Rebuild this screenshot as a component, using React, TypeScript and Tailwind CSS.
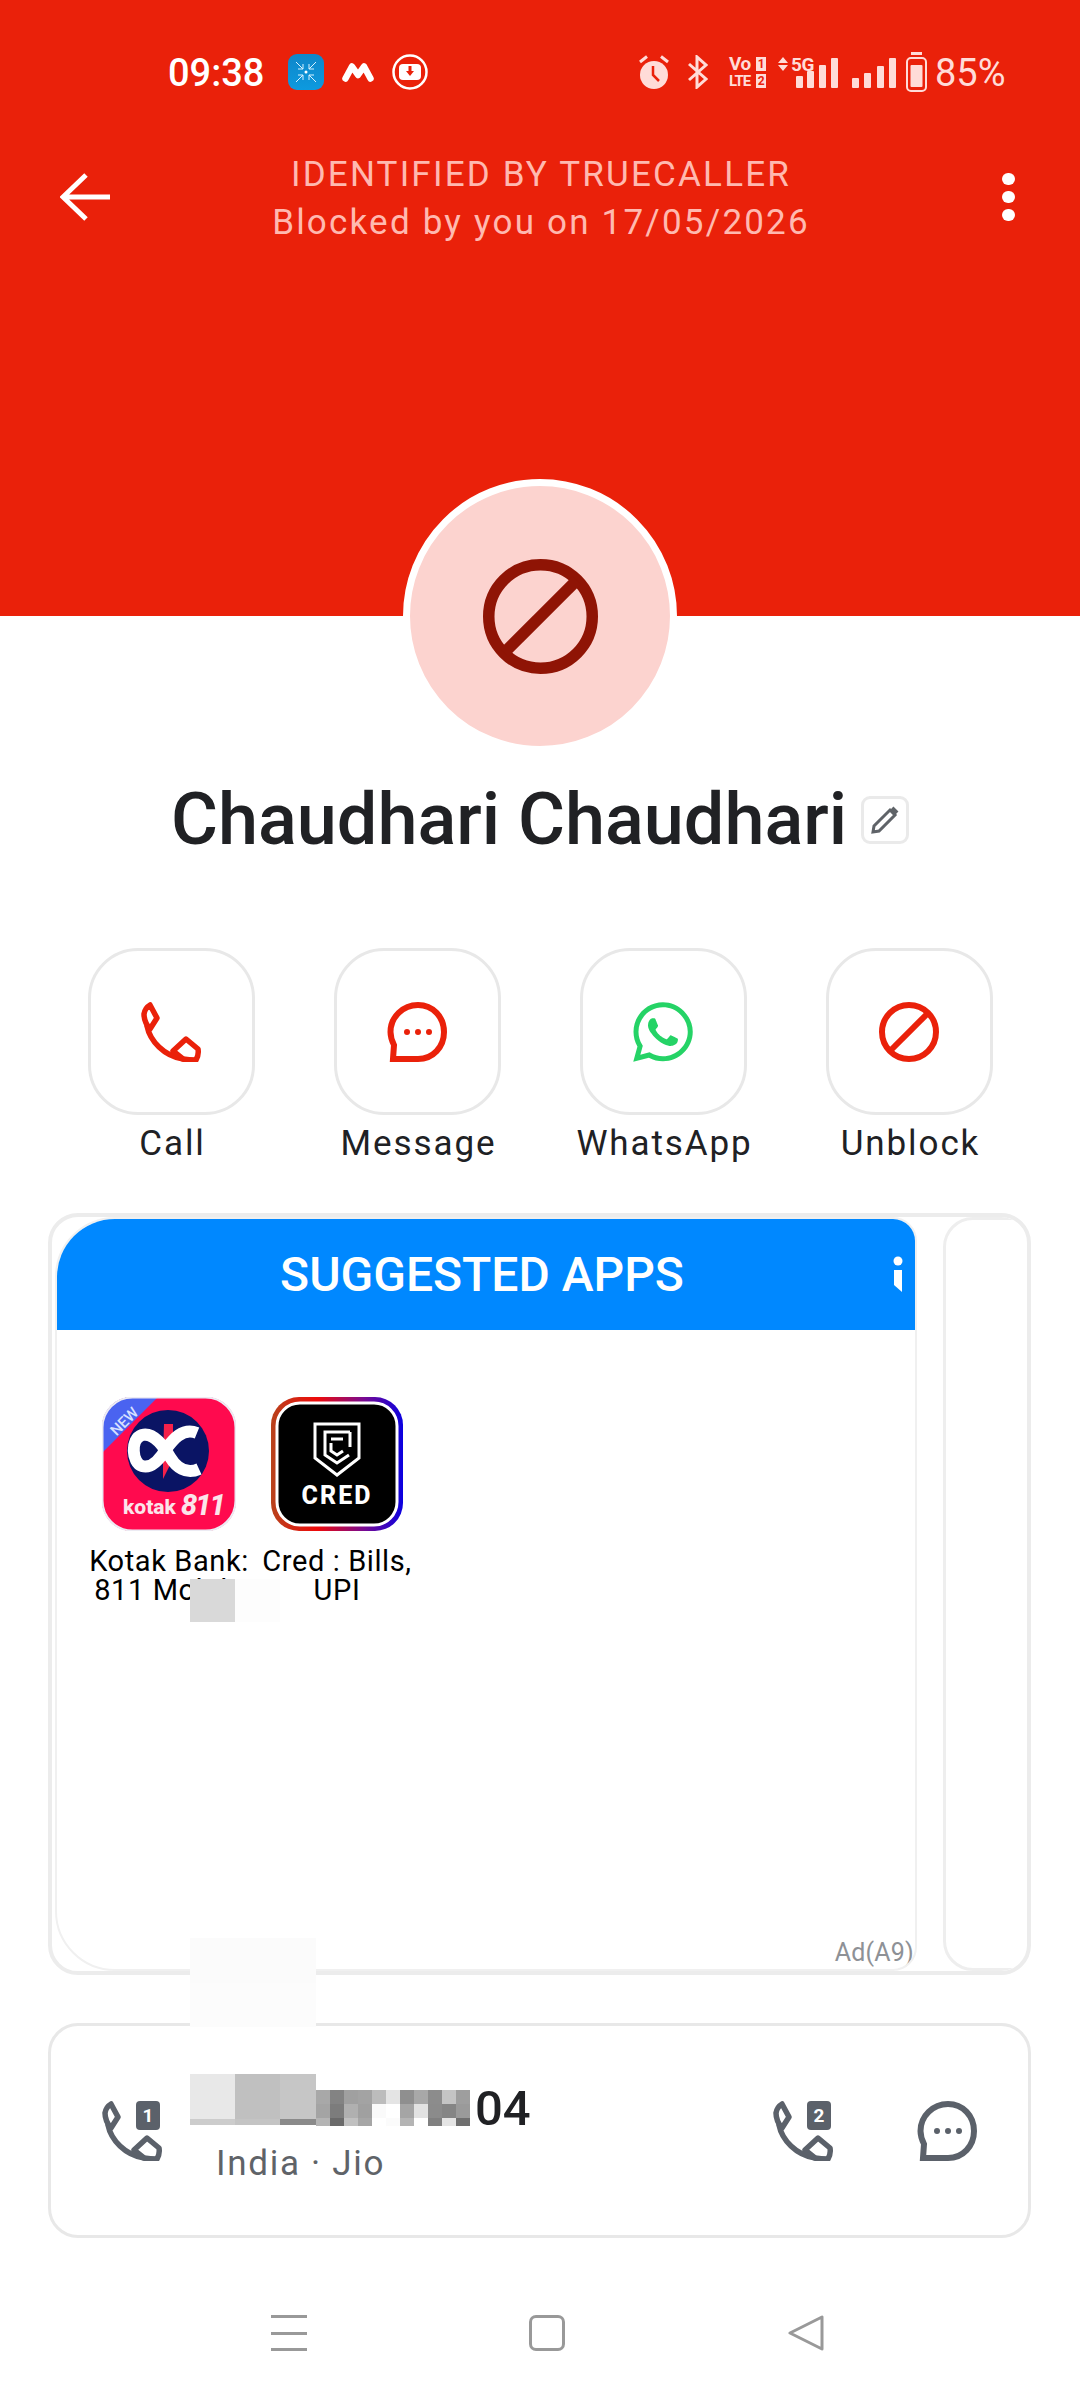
import { FaWhatsapp } from 'react-icons/fa'

const mosaicRows = [
    ['bg-[#a8a8a8]', 'bg-[#838383]', 'bg-[#a0a0a0]', 'bg-[#a3a3a3]', 'bg-[#bcbcbc]', 'bg-[#e4e4e4]', 'bg-[#8f8f8f]', 'bg-[#a8a8a8]', 'bg-[#8c8c8c]', 'bg-[#c4c4c4]', 'bg-[#9e9e9e]'],
    ['bg-[#a4a4a4]', 'bg-[#7c7c7c]', 'bg-[#b0b0b0]', 'bg-[#a0a0a0]', 'bg-[#fafafa]', 'bg-[#ffffff]', 'bg-[#a5a5a5]', 'bg-[#e2e2e2]', 'bg-[#8b8b8b]', 'bg-[#858585]', 'bg-[#9a9a9a]'],
    ['bg-[#b4b4b4]', 'bg-[#6a6a6a]', 'bg-[#c0c0c0]', 'bg-[#a6a6a6]', 'bg-[#ffffff]', 'bg-[#fbfbfb]', 'bg-[#b4b4b4]', 'bg-[#ffffff]', 'bg-[#808080]', 'bg-[#e4e4e4]', 'bg-[#6f6f6f]'],
]

function PhoneIcon({ className }: { className?: string }) {
    return (
        <svg viewBox="0 0 60 60" className={className} fill="none" stroke="currentColor" strokeWidth="5.500" strokeLinejoin="round" strokeLinecap="round">
            <path d="M9 3 L16 16 L9 27 Q3 20 3 12 Q4 6 9 3Z" />
            <path d="M6 24 C9 39 23 54 42 57" />
            <path d="M32 49 L45 37 L57 47 Q58 53 55 58 Q48 58 42 57 Z" />
        </svg>
    )
}

function ChatIcon({ className }: { className?: string }) {
    return (
        <svg viewBox="0 0 60 60" className={className} fill="none" stroke="currentColor" strokeWidth="6">
            <path d="M31 3 C16 3 3.500 15 3.500 30 C3.500 34 4.500 38 7 43 L6 57 H31 C46 57 57 45 57 30 C57 15 46 3 31 3Z" />
            <circle cx="20" cy="30" r="3" fill="currentColor" stroke="none" />
            <circle cx="31" cy="30" r="3" fill="currentColor" stroke="none" />
            <circle cx="42" cy="30" r="3" fill="currentColor" stroke="none" />
        </svg>
    )
}

function BlockIcon({ className, stroke = 6 }: { className?: string; stroke?: number }) {
    return (
        <svg viewBox="0 0 60 60" className={className} fill="none" stroke="currentColor" strokeWidth={stroke}>
            <circle cx="30" cy="30" r={30 - stroke / 2} />
            <path d="M49 11 L11 49" />
        </svg>
    )
}

function KotakLogo() {
    return (
        <svg viewBox="0 0 134 134" className="w-[134px] h-[134px]">
            <defs>
                <clipPath id="kotakClip">
                    <rect width="134" height="134" rx="30" />
                </clipPath>
            </defs>
            <g clipPath="url(#kotakClip)">
                <rect width="134" height="134" fill="#ff0a4e" />
                <path d="M0 0 H56 L0 56 Z" fill="#4a63f0" />
            </g>
            <rect x="0.500" y="0.500" width="133" height="133" rx="30" fill="none" stroke="#ecebf3" strokeWidth="2" />
            <text x="26" y="28" transform="rotate(-45 26 28)" textAnchor="middle" fontSize="15" fontFamily="Roboto" fontWeight="500" fill="#d8e0ff">NEW</text>
            <circle cx="66" cy="54" r="41" fill="#0a1464" />
            <path d="M62 27 L71 27 L71 62 L61 82 L61 62 Z" fill="#f6214a" />
            <path d="M95 36 C80 30 70 44 64 52 C58 62 50 72 40 69 C30 66 28 42 40 38 C52 35 62 50 68 60 C74 70 84 78 97 72" fill="none" stroke="#fff" strokeWidth="12" />
            <text x="21" y="117" fontSize="21" fontFamily="Roboto" fontWeight="800" fill="#fbe4ea">kotak</text>
            <text x="79" y="118" fontSize="29" letterSpacing="-2" fontFamily="Roboto" fontWeight="800" fontStyle="italic" fill="#fbe4ea">811</text>
        </svg>
    )
}

function CredLogo() {
    return (
        <svg viewBox="0 0 132 134" className="w-[132px] h-[134px]">
            <defs>
                <linearGradient id="credEdge" x1="0" y1="0" x2="1" y2="0">
                    <stop offset="0" stopColor="#b8431c" />
                    <stop offset="0.35" stopColor="#ee0a0a" />
                    <stop offset="0.7" stopColor="#7a0a90" />
                    <stop offset="1" stopColor="#0a00e0" />
                </linearGradient>
            </defs>
            <rect width="132" height="134" rx="28" fill="url(#credEdge)" />
            <rect x="6" y="6" width="120" height="122" rx="23" fill="#000" stroke="#fff" strokeWidth="3" />
            <path d="M44 27 H88 V61 L66 78 L44 61 Z" fill="none" stroke="#fff" strokeWidth="3" />
            <path d="M79 35 H54 V58 L66 66 L78 58" fill="none" stroke="#fff" strokeWidth="3" />
            <path d="M79 35 V50 M60 46 V54 L66 58 L72 54 M60 42 H72" fill="none" stroke="#fff" strokeWidth="3" />
            <text x="66" y="107" textAnchor="middle" fontSize="25" letterSpacing="2" fontFamily="Roboto" fontWeight="800" fill="#fff">CRED</text>
        </svg>
    )
}

function StatusBar() {
    return (
        <div className="flex items-center h-[36px] mt-[54px] pl-[168px] text-white">
            <span className="w-[95px] pt-[2px] text-[38px] leading-[36px] font-medium whitespace-nowrap">09:38</span>
            <svg viewBox="0 0 36 36" className="ml-[25px] w-[36px] h-[36px]">
                <defs>
                    <linearGradient id="blueTile" x1="0" y1="0" x2="0" y2="1">
                        <stop offset="0" stopColor="#0f86c9" />
                        <stop offset="1" stopColor="#0d9adf" />
                    </linearGradient>
                </defs>
                <rect width="36" height="36" rx="9" fill="url(#blueTile)" />
                <path d="M8 8 L15 15 M28 8 L21 15 M8 28 L15 21 M28 28 L21 21 M15 10 V15 H10 M21 10 V15 H26 M15 26 V21 H10 M21 26 V21 H26" stroke="#d8f2ff" strokeWidth="1" fill="none" />
                <circle cx="18" cy="18" r="1.500" fill="#fff" />
            </svg>
            <svg viewBox="0 0 32 20" className="ml-[18px] w-[32px] h-[20px]" fill="none" stroke="#fff" strokeWidth="6.500" strokeLinecap="round" strokeLinejoin="round">
                <path d="M3.500 16.500 L10 4.500 L16 13 L22 4.500 L28.500 16.500" />
            </svg>
            <svg viewBox="0 0 36 36" className="ml-[18px] w-[36px] h-[36px]">
                <circle cx="18" cy="18" r="16.500" fill="none" stroke="#fff" strokeWidth="2.500" />
                <rect x="7" y="10" width="22" height="16" rx="4" fill="#fff" />
                <path d="M16.500 12 H19.500 V17 H22 L18 22 L14 17 H16.500 Z" fill="#ea210a" />
            </svg>

            <div className="ml-[210px] flex items-center text-[#ffdcd8]">
                <svg viewBox="0 0 32 34" className="w-[32px] h-[34px]">
                    <circle cx="16" cy="20" r="14" fill="currentColor" />
                    <path d="M2 7 L9 1.500 M30 7 L23 1.500" stroke="currentColor" strokeWidth="3" />
                    <path d="M15 11 V20 L21 26" stroke="#ea210a" strokeWidth="2.500" fill="none" />
                </svg>
                <svg viewBox="0 0 20 34" className="ml-[18px] w-[20px] h-[34px]" fill="none" stroke="currentColor" strokeWidth="3">
                    <path d="M1 9 L18 24 L9 32 V2 L18 10 L1 25" />
                </svg>
                <div className="ml-[21px] w-[37px] flex flex-col gap-[3px] text-[19px] leading-[14px] font-bold tracking-[-0.5px]">
                    <div className="flex justify-between items-center h-[14px]">
                        <span>Vo</span>
                        <span className="w-[10px] h-[14px] bg-[#ffdcd8] text-[#ea210a] text-[12px] text-center">1</span>
                    </div>
                    <div className="flex justify-between items-center h-[14px]">
                        <span className="text-[15px] tracking-[-1px]">LTE</span>
                        <span className="w-[10px] h-[14px] bg-[#ffdcd8] text-[#ea210a] text-[12px] text-center">2</span>
                    </div>
                </div>
                <div className="ml-[12px] w-[60px] h-[32px] relative">
                    <svg viewBox="0 0 60 32" className="w-[60px] h-[32px]" fill="currentColor">
                        <path d="M5 1 L10 7 H0 Z M5 15 L10 9 H0 Z" />
                        <rect x="18" y="20" width="7" height="12" rx="1" />
                        <rect x="29" y="15" width="7" height="17" rx="1" />
                        <rect x="41" y="9" width="7" height="23" rx="1" />
                        <rect x="53" y="2" width="7" height="30" rx="1" />
                    </svg>
                    <span className="absolute left-[13px] top-[1px] text-[19px] leading-[15px] font-bold tracking-[-0.5px]">5G</span>
                </div>
                <svg viewBox="0 0 44 32" className="ml-[14px] w-[44px] h-[32px]" fill="currentColor">
                    <rect x="0" y="22" width="7" height="10" rx="1" />
                    <rect x="12" y="17" width="7" height="15" rx="1" />
                    <rect x="25" y="10" width="7" height="22" rx="1" />
                    <rect x="37" y="2" width="7" height="30" rx="1" />
                </svg>
                <svg viewBox="0 0 21 40" className="ml-[10px] w-[21px] h-[40px]" fill="none" stroke="currentColor" strokeWidth="2">
                    <path d="M5 1.500 H16" strokeWidth="3" />
                    <rect x="1" y="6" width="19" height="33" rx="4" />
                    <rect x="4.500" y="13" width="12" height="22" rx="1" fill="currentColor" stroke="none" />
                </svg>
                <span className="ml-[8px] pt-[2px] text-[38px] leading-[36px] whitespace-nowrap">85%</span>
            </div>
        </div>
    )
}

function ActionButton({ label, children }: { label: string; children: React.ReactNode }) {
    return (
        <div className="flex flex-col items-center">
            <div className="w-[167px] h-[167px] rounded-[50px] border-[3px] border-[#e8e8e8] flex items-center justify-center">
                {children}
            </div>
            <span className="mt-[5px] pl-[3px] text-[35px] leading-[48px] tracking-[1.9px] text-[#202124]">{label}</span>
        </div>
    )
}

function SimCall({ sim }: { sim: string }) {
    return (
        <div className="relative w-[60px] h-[60px] text-[#5b616a]">
            <PhoneIcon className="w-[60px] h-[60px]" />
            <span className="absolute right-[2px] top-0 w-[24px] h-[29px] rounded-[4px] bg-[#5b616a] text-white text-[19px] leading-[29px] font-bold text-center">{sim}</span>
        </div>
    )
}

export default function App() {
    return (
        <div className="relative w-[1080px] h-[2400px] bg-white overflow-hidden [font-family:Roboto,sans-serif]">
            <header className="h-[616px] bg-[#ea210a] flex flex-col">
                <StatusBar />
                <div className="mt-[56px] flex items-center justify-between pl-[60px] pr-[65px]">
                    <svg viewBox="0 0 50 48" className="w-[50px] h-[48px]" fill="none" stroke="#fff" strokeWidth="5">
                        <path d="M50 24 H3 M26 2 L3 24 L26 46" />
                    </svg>
                    <div className="flex flex-col items-center text-[#ffb9b0] text-[35px] leading-[48px] tracking-[2.2px] ml-[-30px] mt-[5px]">
                        <span>IDENTIFIED BY TRUECALLER</span>
                        <span>Blocked by you on 17/05/2026</span>
                    </div>
                    <div className="flex flex-col gap-[6px]">
                        <span className="w-[13px] h-[12px] rounded-full bg-white" />
                        <span className="w-[13px] h-[12px] rounded-full bg-white" />
                        <span className="w-[13px] h-[12px] rounded-full bg-white" />
                    </div>
                </div>
            </header>

            <div className="mx-auto -mt-[137px] relative w-[274px] h-[274px] rounded-full border-[7px] border-white bg-[#fcd3cf] flex items-center justify-center">
                <BlockIcon className="w-[115px] h-[115px] text-[#8f1405]" stroke={6} />
            </div>

            <div className="mt-[21px] h-[92px] flex items-center justify-center gap-[14px]">
                <h1 className="text-[72px] leading-[92px] font-medium text-[#202124]">Chaudhari Chaudhari</h1>
                <div className="w-[48px] h-[48px] rounded-[9px] border-[3px] border-[#eaeaea] flex items-center justify-center">
                    <svg viewBox="0 0 30 30" className="w-[30px] h-[30px]" fill="none" stroke="#5f6368" strokeWidth="3">
                        <path d="M3 27 L4 21 L20 5 L25 10 L9 26 Z" />
                        <path d="M22 3 L27 8" strokeWidth="4" />
                    </svg>
                </div>
            </div>

            <div className="mt-[82px] px-[48px] grid grid-cols-4">
                <ActionButton label="Call">
                    <PhoneIcon className="w-[60px] h-[60px] text-[#ea210a]" />
                </ActionButton>
                <ActionButton label="Message">
                    <ChatIcon className="w-[60px] h-[60px] text-[#ea210a]" />
                </ActionButton>
                <ActionButton label="WhatsApp">
                    <FaWhatsapp className="w-[68px] h-[68px] text-[#25d366]" />
                </ActionButton>
                <ActionButton label="Unblock">
                    <BlockIcon className="w-[60px] h-[60px] text-[#ea210a]" />
                </ActionButton>
            </div>

            <section className="mt-[45px] ml-[48px] w-[983px] h-[762px] rounded-[30px] border-[4px] border-[#ececec] overflow-hidden flex">
                <div className="ml-[3px] shrink-0 w-[862px] h-[754px] rounded-tl-[60px] rounded-tr-[24px] rounded-bl-[60px] rounded-br-[24px] border-2 border-[#f0f0f0] overflow-hidden flex flex-col">
                    <div className="relative h-[111px] bg-[#0088ff] flex items-center justify-center text-white">
                        <h2 className="text-[48px] font-medium pr-[8px]">SUGGESTED APPS</h2>
                        <svg viewBox="0 0 10 36" className="absolute right-[12px] top-[37px] w-[10px] h-[36px]" fill="#fff">
                            <circle cx="5" cy="5" r="4.500" />
                            <path d="M1 14 H9 V36 L1 29 Z" />
                        </svg>
                    </div>
                    <div className="flex-1 flex flex-col pl-[28px] pt-[67px]">
                        <div className="flex">
                            <div className="w-[168px] flex flex-col items-center">
                                <KotakLogo />
                                <p className="mt-[16px] w-[168px] text-center text-[29px] leading-[29px] tracking-[0.6px] text-black">Kotak Bank: 811 Mobile</p>
                            </div>
                            <div className="w-[168px] flex flex-col items-center">
                                <CredLogo />
                                <p className="mt-[16px] w-[168px] text-center text-[29px] leading-[29px] tracking-[0.6px] text-black">Cred : Bills, UPI</p>
                            </div>
                        </div>
                        <span className="mt-auto mb-[1px] mr-[1px] self-end text-[25px] leading-[30px] tracking-[0.2px] text-[#8e9196]">Ad(A9)</span>
                    </div>
                </div>
                <div className="ml-[26px] shrink-0 w-[100px] h-[754px] rounded-[30px] border-[3px] border-[#eeeeee]" />
            </section>

            <section className="mt-[48px] ml-[48px] w-[983px] h-[215px] rounded-[30px] border-[3px] border-[#e8e8e8] flex items-center pl-[51px] pr-[51px]">
                <SimCall sim="1" />
                <div className="ml-[54px] flex-1 mt-[12px]">
                    <div className="h-[48px] text-[49px] leading-[48px] font-medium text-[#202124]">
                        <span className="ml-[259px]">04</span>
                    </div>
                    <p className="mt-[7px] text-[35px] leading-[48px] tracking-[1.7px] text-[#5f6368]">India · Jio</p>
                </div>
                <SimCall sim="2" />
                <ChatIcon className="ml-[84px] w-[60px] h-[60px] text-[#5b616a]" />
            </section>

            <nav className="mt-[77px] flex items-center pl-[271px] text-[#999999]">
                <div className="w-[36px] h-[36px] flex flex-col justify-between">
                    <span className="h-[3px] bg-[#999999]" />
                    <span className="h-[3px] bg-[#999999]" />
                    <span className="h-[3px] bg-[#999999]" />
                </div>
                <div className="ml-[222px] w-[36px] h-[36px] rounded-[7px] border-[3px] border-[#999999]" />
                <svg viewBox="0 0 36 36" className="ml-[223px] w-[36px] h-[36px]" fill="none" stroke="currentColor" strokeWidth="3" strokeLinejoin="round">
                    <path d="M34 2 V34 L2 18 Z" />
                </svg>
            </nav>

            {/* redaction patches laid over the screenshot */}
            <div className="absolute left-[190px] top-[1579px] w-[45px] h-[43px] bg-[#d9d9d9]" />
            <div className="absolute left-[235px] top-[1579px] w-[45px] h-[43px] bg-[#fdfdfd]" />
            <div className="absolute left-[190px] top-[1938px] w-[126px] h-[45px] bg-[#fbfbfb]" />
            <div className="absolute left-[190px] top-[1983px] w-[126px] h-[44px] bg-[#fcfcfc]" />
            <div className="absolute left-[190px] top-[2074px] w-[126px] flex flex-col">
                <div className="flex h-[45px]">
                    <span className="w-[45px] bg-[#e8e8e8]" />
                    <span className="w-[45px] bg-[#c0c0c0]" />
                    <span className="w-[36px] bg-[#c6c6c6]" />
                </div>
                <div className="flex h-[6px]">
                    <span className="w-[45px] bg-[#cccccc]" />
                    <span className="w-[45px] bg-[#c4c4c4]" />
                    <span className="w-[36px] bg-[#8a8a8a]" />
                </div>
            </div>
            <div className="absolute left-[316px] top-[2090px] flex flex-col">
                {mosaicRows.map((row, i) => (
                    <div key={i} className={i === 2 ? 'flex h-[8px]' : 'flex h-[14px]'}>
                        {row.map((cell, j) => (
                            <span key={j} className={`w-[14px] ${cell}`} />
                        ))}
                    </div>
                ))}
            </div>
        </div>
    )
}
